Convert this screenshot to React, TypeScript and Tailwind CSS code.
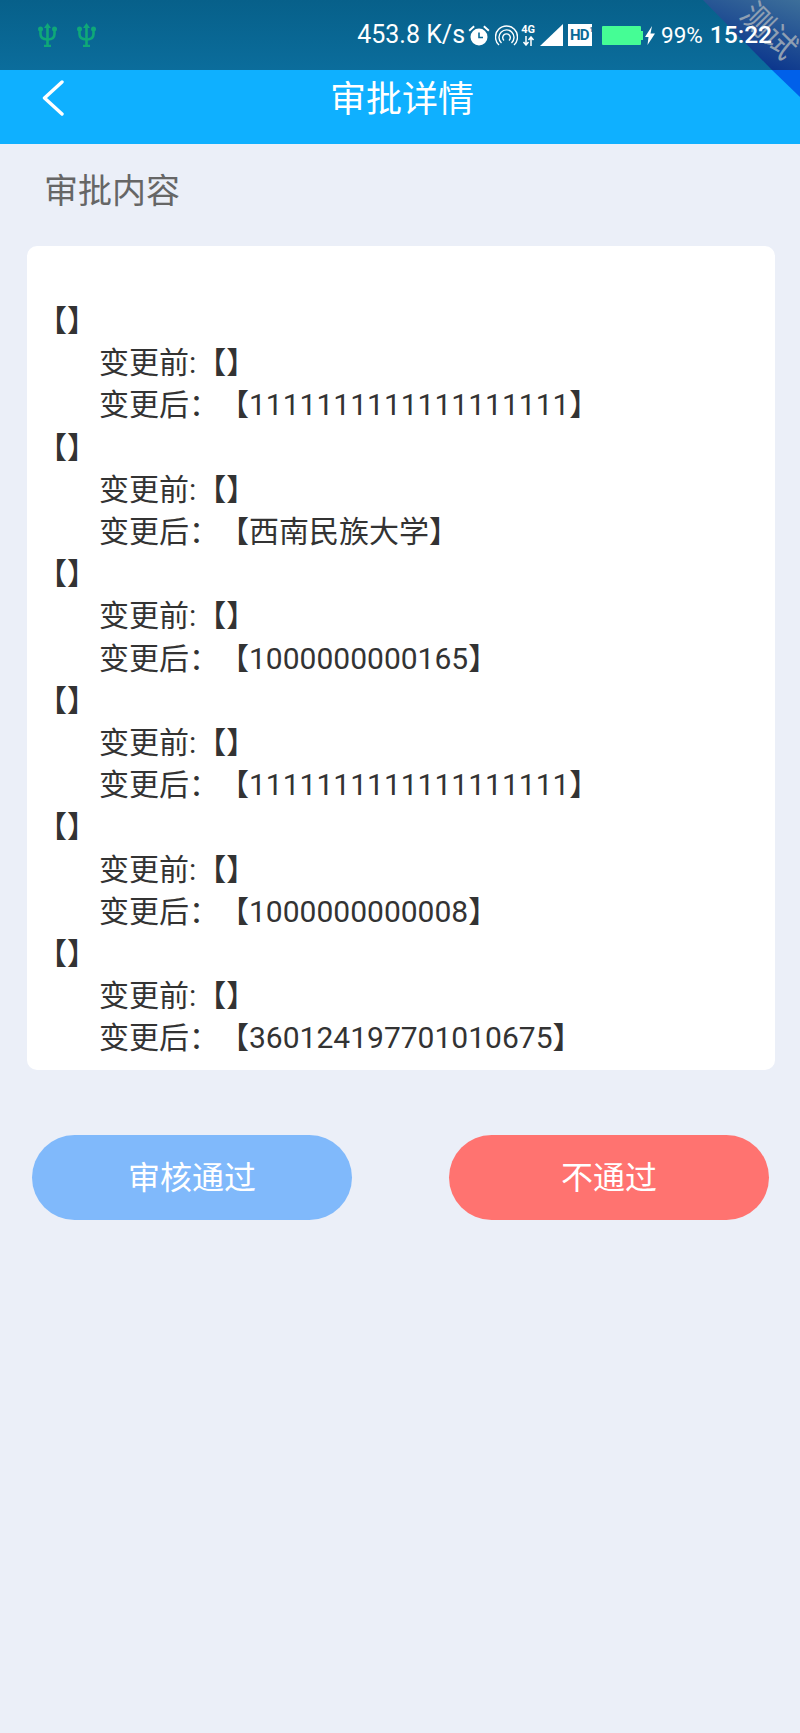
import React from "react";

const FONT = { fontFamily: '"Roboto", "Noto Sans CJK SC", sans-serif' };

const rows = [
  "【1111111111111111111】",
  "【西南民族大学】",
  "【1000000000165】",
  "【1111111111111111111】",
  "【1000000000008】",
  "【360124197701010675】",
];

function Trident() {
  return (
    <svg width="19" height="24" viewBox="0 0 19 24" fill="none" stroke="#0fa878" strokeWidth="2.600">
      <path d="M9.500 3v21M6 23h7" />
      <path d="M2.500 6v5c0 3.500 2.500 5.500 7 5.500s7-2 7-5.500V6" />
      <path d="M9.500 0l3.500 5h-7z" fill="#0fa878" stroke="none" />
      <circle cx="2.500" cy="6" r="2.500" fill="#0fa878" stroke="none" />
      <circle cx="16.500" cy="6" r="2.500" fill="#0fa878" stroke="none" />
    </svg>
  );
}

function StatusBar() {
  return (
    <div className="h-[70px] flex items-center justify-between pl-[38px] pr-[28px] bg-gradient-to-b from-[#07608a] to-[#0b6d9c] text-white">
      <div className="relative z-10 flex items-center gap-[20px] mb-[1px]">
        <Trident />
        <Trident />
      </div>
      <div className="relative z-10 flex items-center h-[30px]">
        <span className="text-[25px] leading-[30px]">453.8 K/s</span>
        <svg className="ml-[3px]" width="22" height="21" viewBox="0 0 22 21" fill="white">
          <path d="M0.500 5l5-4.500 1.300 1.500-5 4.500zM21.500 5l-5-4.500-1.300 1.500 5 4.500z" />
          <circle cx="11" cy="12" r="8.500" />
          <path d="M11 7.500V12.500H15" stroke="#0a6a96" strokeWidth="1.600" fill="none" />
        </svg>
        <svg className="ml-[5px]" width="23" height="22" viewBox="0 0 23 22" fill="none" stroke="white" strokeWidth="1.400">
          <path d="M4 21a11 11 0 1 1 15 0" />
          <path d="M6.500 19a7.500 7.500 0 1 1 10 0" />
          <path d="M9 16.500a3.800 3.800 0 1 1 5 0" />
        </svg>
        <div className="ml-[3px] w-[14px] flex flex-col items-center leading-none">
          <span className="text-[11px] font-bold leading-[11px]">4G</span>
          <svg width="13" height="10" viewBox="0 0 13 10" stroke="white" strokeWidth="1.500" fill="none" className="mt-[1px]">
            <path d="M4 0v9M1.500 6l2.500 3 2.500-3M9 10V1M6.500 4L9 1l2.500 3" />
          </svg>
        </div>
        <svg className="ml-[5px]" width="23" height="22" viewBox="0 0 23 22" fill="white">
          <path d="M23 0v22H0z" />
        </svg>
        <div className="ml-[5px] w-[24px] h-[22px] bg-white flex items-start pl-[2px] pt-[2px]">
          <span className="text-[#0a6a96] text-[15px] leading-[18px] font-bold tracking-[-1px]">HD</span>
          <span className="text-[#0a6a96] text-[7px] leading-[9px] font-bold ml-[1px]">1</span>
        </div>
        <div className="ml-[10px] w-[39px] h-[19px] bg-[#45fd95] rounded-[1px]" />
        <div className="w-[2px] h-[9px] bg-[#45fd95]" />
        <svg className="ml-[2px]" width="10" height="19" viewBox="0 0 10 19" fill="white">
          <path d="M7 0L0 11h3.500l-1 8L10 7.500H5.500z" />
        </svg>
        <span className="ml-[6px] text-[22.500px] leading-[30px]">99%</span>
        <span className="ml-[7px] text-[24.500px] leading-[30px] font-medium">15:22</span>
      </div>
    </div>
  );
}

function Header() {
  return (
    <header className="h-[74px] bg-[#0fb0ff] flex items-start">
      <div className="w-[330px] pl-[42px] pt-[10px]">
        <svg width="22" height="36" viewBox="0 0 22 36" fill="none" stroke="white" strokeWidth="3.400" strokeLinecap="round" strokeLinejoin="round">
          <path d="M20 2L2.500 18 20 34" />
        </svg>
      </div>
      <h1 className="text-white text-[36px] leading-[42px] font-normal pt-[9px]">审批详情</h1>
    </header>
  );
}

function ChangeGroup({ value }: { value: string }) {
  return (
    <>
      <div className="pl-[10px]">【】</div>
      <div className="pl-[72px] whitespace-pre">变更前:【】</div>
      <div className="pl-[72px] whitespace-pre [text-spacing-trim:space-all]">变更后：{value}</div>
    </>
  );
}

export default function App() {
  return (
    <div className="relative w-[800px] h-[1733px] overflow-hidden bg-[#ebeff8]" style={FONT}>
      <StatusBar />
      <Header />
      <h2 className="pl-[44px] pt-[27px] text-[34px] leading-[40px] font-normal text-[#666666]">审批内容</h2>
      <section className="ml-[27px] mr-[25px] mt-[35px] h-[824px] bg-white rounded-[10px] pt-[54px] text-[#333333] text-[30px] leading-[42.200px] overflow-hidden">
        {rows.map((value, i) => (
          <ChangeGroup key={i} value={value} />
        ))}
      </section>
      <div className="ml-[32px] mr-[31px] mt-[65px] flex justify-between">
        <button className="w-[320px] h-[85px] rounded-full bg-[#80b9fb] text-white text-[32px]">审核通过</button>
        <button className="w-[320px] h-[85px] rounded-full bg-[#ff7370] text-white text-[32px]">不通过</button>
      </div>

      {/* Test-build ribbon across the top right corner */}
      <svg className="absolute top-0 right-0" width="97" height="97" viewBox="0 0 97 97">
        <defs>
          <linearGradient id="ribbon" x1="1" y1="0" x2="0.500" y2="1">
            <stop offset="0" stopColor="#3d6f9a" />
            <stop offset="1" stopColor="#07318c" />
          </linearGradient>
        </defs>
        <path d="M69 70H97V97z" fill="#0060ea" />
        <path d="M0 0H97V70H69z" fill="url(#ribbon)" />
      </svg>
      <div className="absolute top-[11px] right-[-4px] w-[70px] text-center rotate-45 text-[32px] leading-[40px] text-[#8f9fb2]">测试</div>
    </div>
  );
}
